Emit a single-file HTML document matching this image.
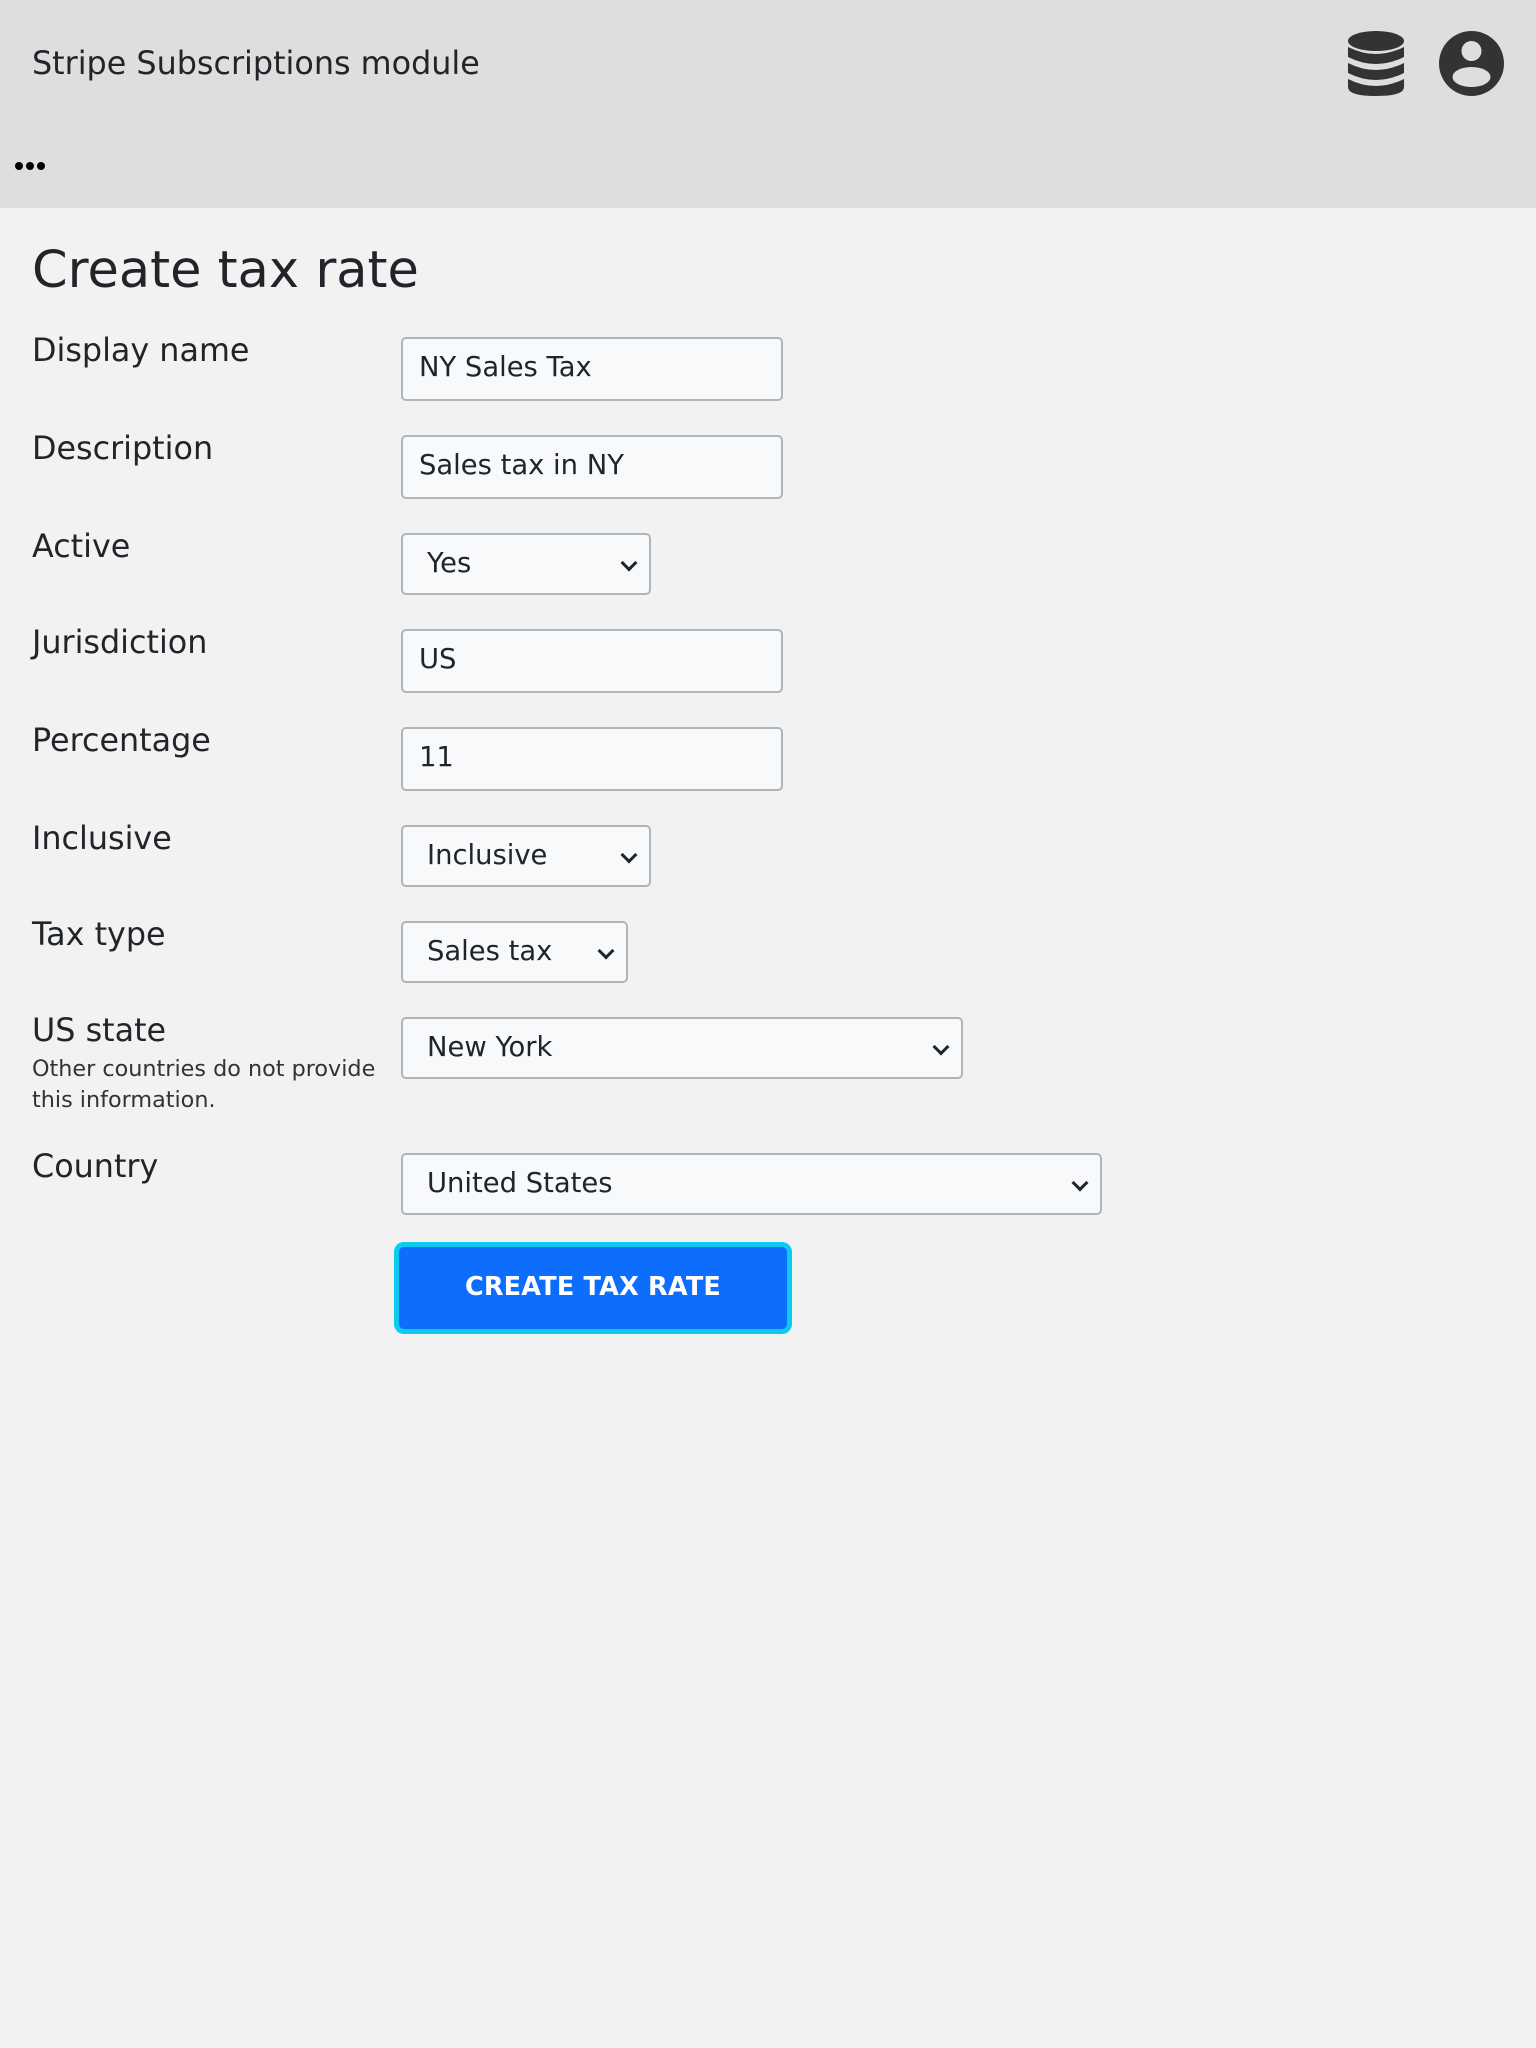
<!DOCTYPE html>
<html><head><meta charset="utf-8"><style>
*{box-sizing:border-box;margin:0;padding:0}
body{width:1536px;height:2048px;background:#f2f2f2;font-family:"DejaVu Sans","Liberation Sans",sans-serif;color:#212529;position:relative;overflow:hidden}
.hdr{position:absolute;left:0;top:0;width:1536px;height:208px;background:#dedede}
.t{position:absolute;left:32px;top:44px;font-size:31.8px;line-height:40px;color:#212529}
.dots{position:absolute;left:15px;top:155px}
.dots i{display:inline-block;width:8px;height:8px;border-radius:50%;background:#000;margin-right:3px}
h1{position:absolute;left:32px;top:239px;font-size:51px;font-weight:400;line-height:64px}
.l{position:absolute;left:32px;font-size:31.8px;line-height:40px}
.f{position:absolute;left:401px;height:64px;background:#f8f9fa;border:2px solid #adb5bd;border-radius:5px;font-size:27.4px;line-height:58px;padding-left:16px}
.s{padding-left:24px;height:62px;line-height:58px}
.s:after{content:"";position:absolute;right:14px;top:22px;width:9px;height:9px;border-right:3.5px solid #212529;border-bottom:3.5px solid #212529;transform:rotate(45deg)}
.help{position:absolute;left:32px;top:1054px;font-size:22.3px;line-height:31px;color:#333}
.btn{position:absolute;left:394px;top:1242px;width:398px;height:92px;border:5px solid #0dcaf0;border-radius:10px;background:#0d6efd;color:#fff;font-weight:bold;font-size:25.5px;text-align:center;line-height:80px;letter-spacing:0.2px}
</style></head><body>
<div class="hdr">
<div class="t">Stripe Subscriptions module</div>
<svg style="position:absolute;left:1348px;top:31px" width="56" height="65" viewBox="0 0 56 65"><g fill="#333"><ellipse cx="28" cy="10" rx="28" ry="10"/><path d="M0 16q28 14 56 0v10q-28 14-56 0z"/><path d="M0 32q28 14 56 0v10q-28 14-56 0z"/><path d="M0 48q28 14 56 0v8q0 9-28 9t-28-9z"/></g></svg>
<svg style="position:absolute;left:1439px;top:31px" width="65" height="65" viewBox="0 0 65 65"><circle cx="32.5" cy="32.5" r="32.5" fill="#333"/><circle cx="32.5" cy="20" r="10" fill="#dedede"/><ellipse cx="32.5" cy="46" rx="19" ry="10" fill="#dedede"/></svg>
<div class="dots"><i></i><i></i><i></i></div>
</div>
<h1>Create tax rate</h1>
<div class="l" style="top:331px">Display name</div>
<div class="f" style="top:337px;width:382px">NY Sales Tax</div>
<div class="l" style="top:429px">Description</div>
<div class="f" style="top:435px;width:382px">Sales tax in NY</div>
<div class="l" style="top:527px">Active</div>
<div class="f s" style="top:533px;width:250px">Yes</div>
<div class="l" style="top:623px">Jurisdiction</div>
<div class="f" style="top:629px;width:382px">US</div>
<div class="l" style="top:721px">Percentage</div>
<div class="f" style="top:727px;width:382px">11</div>
<div class="l" style="top:819px">Inclusive</div>
<div class="f s" style="top:825px;width:250px">Inclusive</div>
<div class="l" style="top:915px">Tax type</div>
<div class="f s" style="top:921px;width:227px">Sales tax</div>
<div class="l" style="top:1011px">US state</div>
<div class="help">Other countries do not provide<br>this information.</div>
<div class="f s" style="top:1017px;width:562px">New York</div>
<div class="l" style="top:1147px">Country</div>
<div class="f s" style="top:1153px;width:701px">United States</div>
<div class="btn">CREATE TAX RATE</div>
</body></html>
